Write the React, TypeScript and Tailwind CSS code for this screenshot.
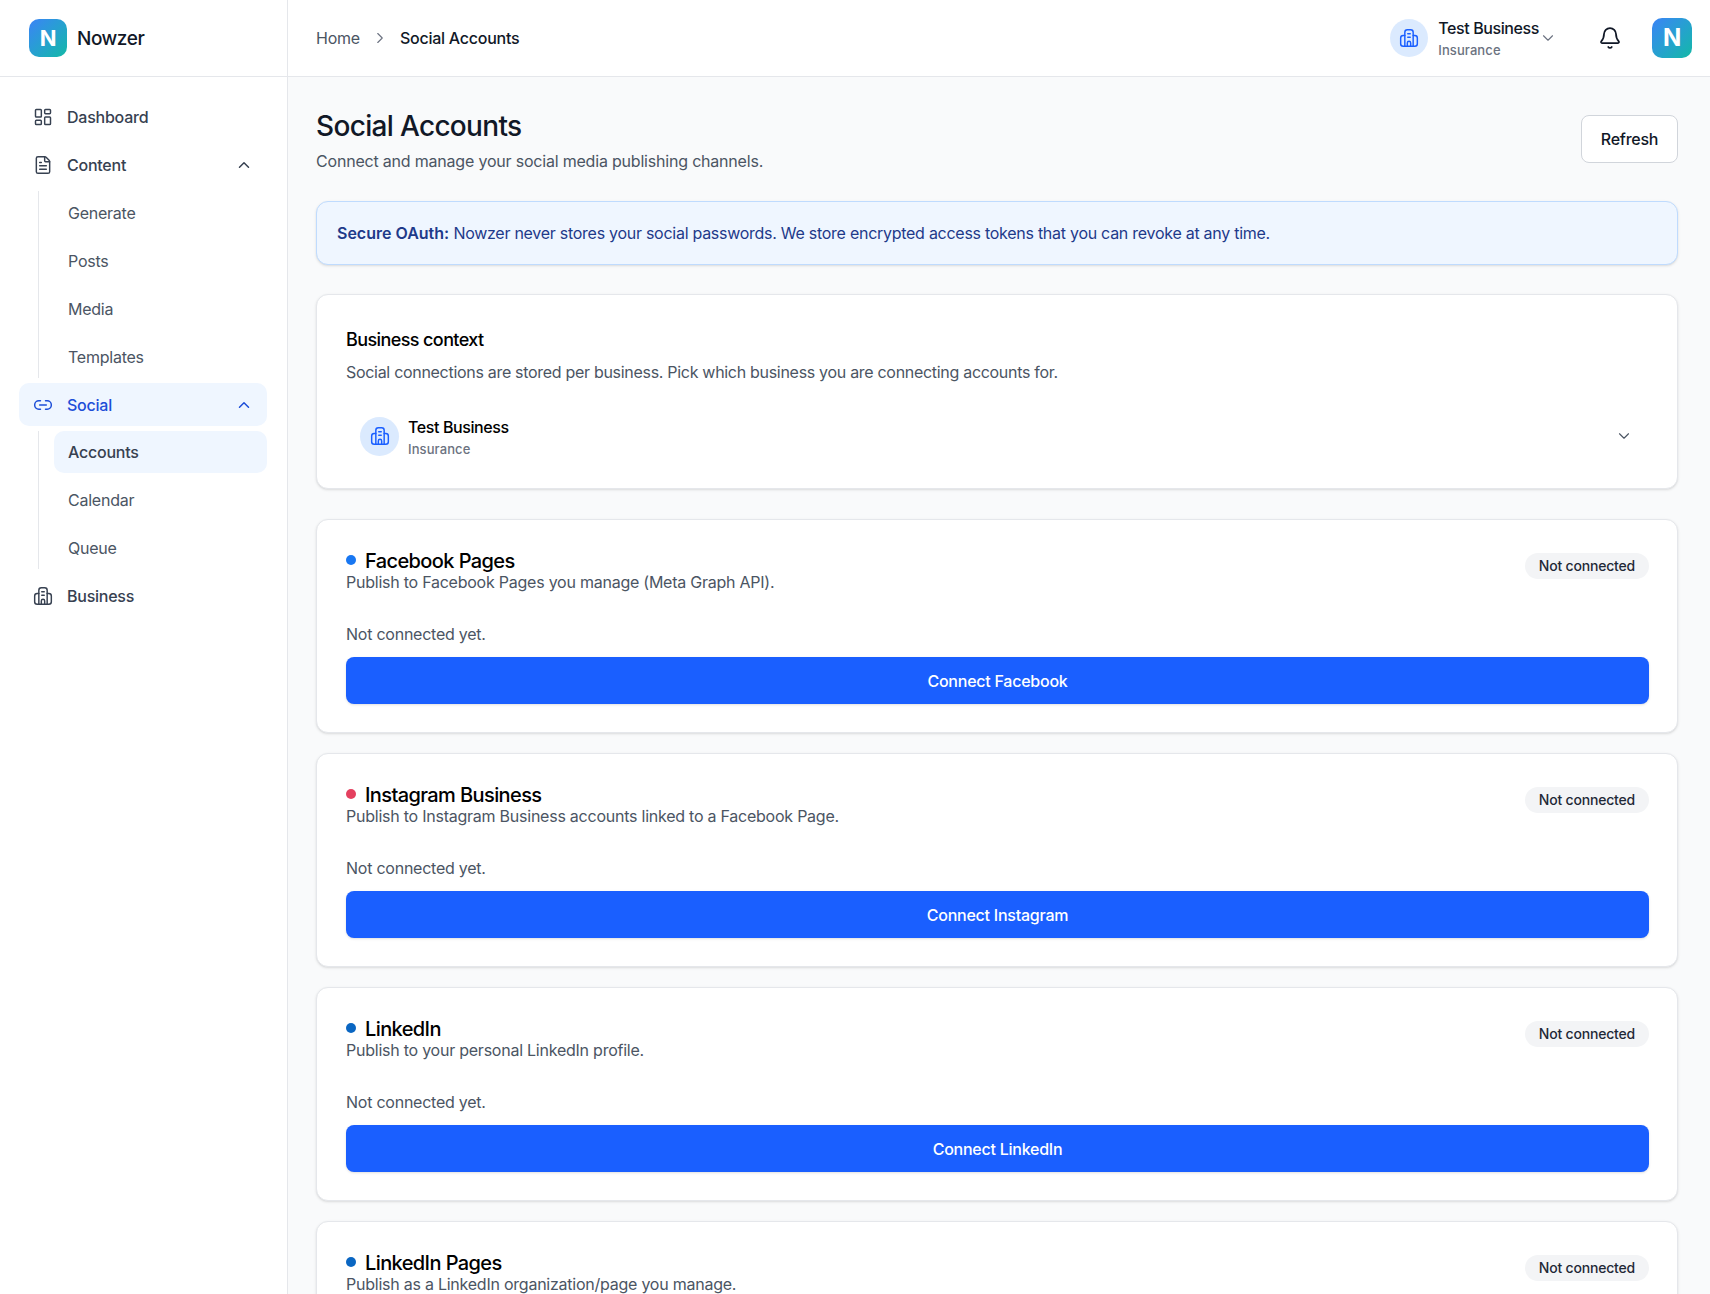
import { Bell, ChevronDown, ChevronRight, ChevronUp, FileText, LayoutDashboard, Link2 } from "lucide-react";

const subContent = ["Generate", "Posts", "Media", "Templates"];

const channels = [
  { title: "Facebook Pages", desc: "Publish to Facebook Pages you manage (Meta Graph API).", cta: "Connect Facebook", dot: "bg-[#1877f2]" },
  { title: "Instagram Business", desc: "Publish to Instagram Business accounts linked to a Facebook Page.", cta: "Connect Instagram", dot: "bg-[#e4405f]" },
  { title: "LinkedIn", desc: "Publish to your personal LinkedIn profile.", cta: "Connect LinkedIn", dot: "bg-[#0a66c2]" },
  { title: "LinkedIn Pages", desc: "Publish as a LinkedIn organization/page you manage.", cta: "Connect LinkedIn Pages", dot: "bg-[#0a66c2]" },
];

function BuildingIcon({ className }: { className?: string }) {
  return (
    <svg className={className} viewBox="0 0 24 24" fill="none" stroke="currentColor" strokeWidth={1.75} strokeLinecap="round" strokeLinejoin="round">
      <path d="M7 9H5a3 3 0 0 0-3 3v7a3 3 0 0 0 3 3h14a3 3 0 0 0 3-3v-7a3 3 0 0 0-3-3h-2" />
      <path d="M7 22V5a3 3 0 0 1 3-3h4a3 3 0 0 1 3 3v17" />
      <path d="M10.5 7h3M10.5 11h3M10 22v-4a2 2 0 0 1 4 0v4" />
    </svg>
  );
}

function Logo({ className }: { className: string }) {
  return (
    <div className={`flex shrink-0 items-center justify-center rounded-[10px] bg-gradient-to-br from-[#3b82f6] to-[#14b8a6] font-bold text-white ${className}`}>
      N
    </div>
  );
}

function NavItem({ label, icon: Icon, open, active }: any) {
  return (
    <div className={`flex h-[43px] items-center gap-3.5 rounded-[10px] px-3.5 font-medium ${active ? "bg-[#eff6ff] text-[#1d4ed8]" : "text-[#374151]"}`}>
      <Icon className="h-5 w-5 shrink-0" strokeWidth={1.75} />
      <span className="flex-1">{label}</span>
      {open && <ChevronUp className="h-[18px] w-[18px]" />}
    </div>
  );
}

function SubItem({ label, active }: { label: string; active?: boolean }) {
  return (
    <div className={`flex items-center rounded-[10px] px-3.5 ${active ? "h-[42px] bg-[#eff6ff] font-medium text-[#374151]" : "h-[43px] text-[#4b5563]"}`}>
      {label}
    </div>
  );
}

function Sidebar() {
  return (
    <aside className="flex w-[288px] shrink-0 flex-col border-r border-[#e5e7eb] bg-white">
      <div className="flex h-[77px] items-center gap-2.5 border-b border-[#e5e7eb] pl-[29px]">
        <Logo className="h-[38px] w-[38px] text-[22px]" />
        <span className="pt-0.5 text-[19px] font-medium tracking-[-0.025em] text-[#111827]">Nowzer</span>
      </div>
      <nav className="flex flex-col gap-[5px] py-[18px] pr-5 pl-[19px]">
        <NavItem label="Dashboard" icon={LayoutDashboard} />
        <NavItem label="Content" icon={FileText} open />
        <div className="ml-[19px] flex flex-col gap-[5px] border-l border-[#e5e7eb] pl-[15px]">
          {subContent.map((s) => (
            <SubItem key={s} label={s} />
          ))}
        </div>
        <NavItem label="Social" icon={Link2} open active />
        <div className="ml-[19px] flex flex-col gap-[5px] border-l border-[#e5e7eb] pl-[15px]">
          <SubItem label="Accounts" active />
          <SubItem label="Calendar" />
          <SubItem label="Queue" />
        </div>
        <NavItem label="Business" icon={BuildingIcon} />
      </nav>
    </aside>
  );
}

function Topbar() {
  return (
    <header className="flex h-[77px] shrink-0 items-center justify-between border-b border-[#e5e7eb] bg-white pl-7 pr-[18px]">
      <div className="flex items-center gap-[11px]">
        <span className="text-[#4b5563]">Home</span>
        <ChevronRight className="h-[18px] w-[18px] text-[#6b7280]" strokeWidth={1.5} />
        <span className="font-medium text-[#111827]">Social Accounts</span>
      </div>
      <div className="flex items-center">
        <div className="flex h-[38px] w-[38px] items-center justify-center rounded-full bg-[#dbeafe]">
          <BuildingIcon className="h-5 w-5 text-[#1a5fff]" />
        </div>
        <div className="ml-2.5 flex flex-col">
          <span className="text-base leading-6 font-medium tracking-[-0.4px] text-[#111827]">Test Business</span>
          <span className="text-[13px] leading-5 font-medium tracking-[0.1px] text-[#6b7280]">Insurance</span>
        </div>
        <ChevronDown className="h-[18px] w-[18px] text-[#6b7280]" strokeWidth={1.5} />
        <Bell className="ml-[41px] h-6 w-6 text-[#111827]" strokeWidth={1.75} />
        <Logo className="ml-[30px] h-10 w-10 text-[24px]" />
      </div>
    </header>
  );
}

function ChannelCard({ title, desc, cta, dot }: any) {
  return (
    <div className="shrink-0 rounded-xl border border-[#e5e7eb] bg-white pt-[30px] pr-[28px] pb-[28px] pl-[29px] shadow-sm">
      <div className="flex items-start justify-between">
        <div>
          <div className="flex items-center gap-[9px]">
            <span className={`h-2.5 w-2.5 rounded-full ${dot}`} />
            <h3 className="h-5 text-xl leading-[22px] font-medium tracking-[-0.03em] text-black">{title}</h3>
          </div>
          <p className="leading-6 text-[#4b5563]">{desc}</p>
        </div>
        <span className="mt-[3px] rounded-full bg-[#f3f4f6] px-3.5 py-[3px] text-sm font-medium tracking-[-0.2px] text-[#1f2937]">Not connected</span>
      </div>
      <p className="mt-7 leading-6 text-[#4b5563]">Not connected yet.</p>
      <button className="mt-[11px] flex h-[47px] w-full items-center justify-center rounded-lg bg-[#1a5fff] font-medium text-white shadow-sm">
        {cta}
      </button>
    </div>
  );
}

export default function App() {
  return (
    <div className="flex h-[1294px] overflow-hidden bg-[#f9fafb] font-['Inter',sans-serif] text-base tracking-[-0.24px]">
      <Sidebar />
      <div className="flex min-w-0 flex-1 flex-col">
        <Topbar />
        <main className="flex flex-col pt-[30px] pr-8 pl-7">
          <div className="flex items-start justify-between">
            <div>
              <h1 className="pt-px text-[28px] leading-9 font-medium tracking-[-0.024em] text-[#111827]">Social Accounts</h1>
              <p className="mt-[5px] leading-6 tracking-[-0.2px] text-[#4b5563]">Connect and manage your social media publishing channels.</p>
            </div>
            <button className="mt-2 h-[48px] w-[97px] rounded-lg border border-[#d1d5db] bg-white font-medium text-[#111827]">Refresh</button>
          </div>

          <div className="mt-[28px] flex h-[64px] items-center rounded-xl border border-[#bfdbfe] bg-[#eff6ff] px-5 text-[#1e3a8a] shadow-sm">
            <p className="tracking-[-0.27px]"><strong className="font-semibold tracking-[0px]">Secure OAuth:</strong> Nowzer never stores your social passwords. We store encrypted access tokens that you can revoke at any time.</p>
          </div>

          <div className="mt-[29px] rounded-xl border border-[#e5e7eb] bg-white pt-[31px] pr-[28px] pb-[29px] pl-[29px] shadow-sm">
            <h2 className="text-lg leading-7 font-medium tracking-[-0.6px] text-black">Business context</h2>
            <p className="mt-1.5 leading-6 tracking-[-0.3px] text-[#4b5563]">Social connections are stored per business. Pick which business you are connecting accounts for.</p>
            <div className="mt-[29px] flex items-center pr-4 pl-3.5">
              <div className="flex h-[39px] w-[39px] items-center justify-center rounded-full bg-[#dbeafe]">
                <BuildingIcon className="h-5 w-5 text-[#1a5fff]" />
              </div>
              <div className="mt-0.5 ml-[9px] flex flex-1 flex-col">
                <span className="leading-6 font-medium tracking-[-0.4px] text-black">Test Business</span>
                <span className="text-[13px] leading-5 font-medium tracking-[0.1px] text-[#6b7280]">Insurance</span>
              </div>
              <ChevronDown className="h-[18px] w-[18px] text-[#4b5563]" strokeWidth={1.5} />
            </div>
          </div>

          <div className="mt-[30px] flex flex-col gap-5">
            {channels.map((c) => (
              <ChannelCard key={c.title} {...c} />
            ))}
          </div>
        </main>
      </div>
    </div>
  );
}
